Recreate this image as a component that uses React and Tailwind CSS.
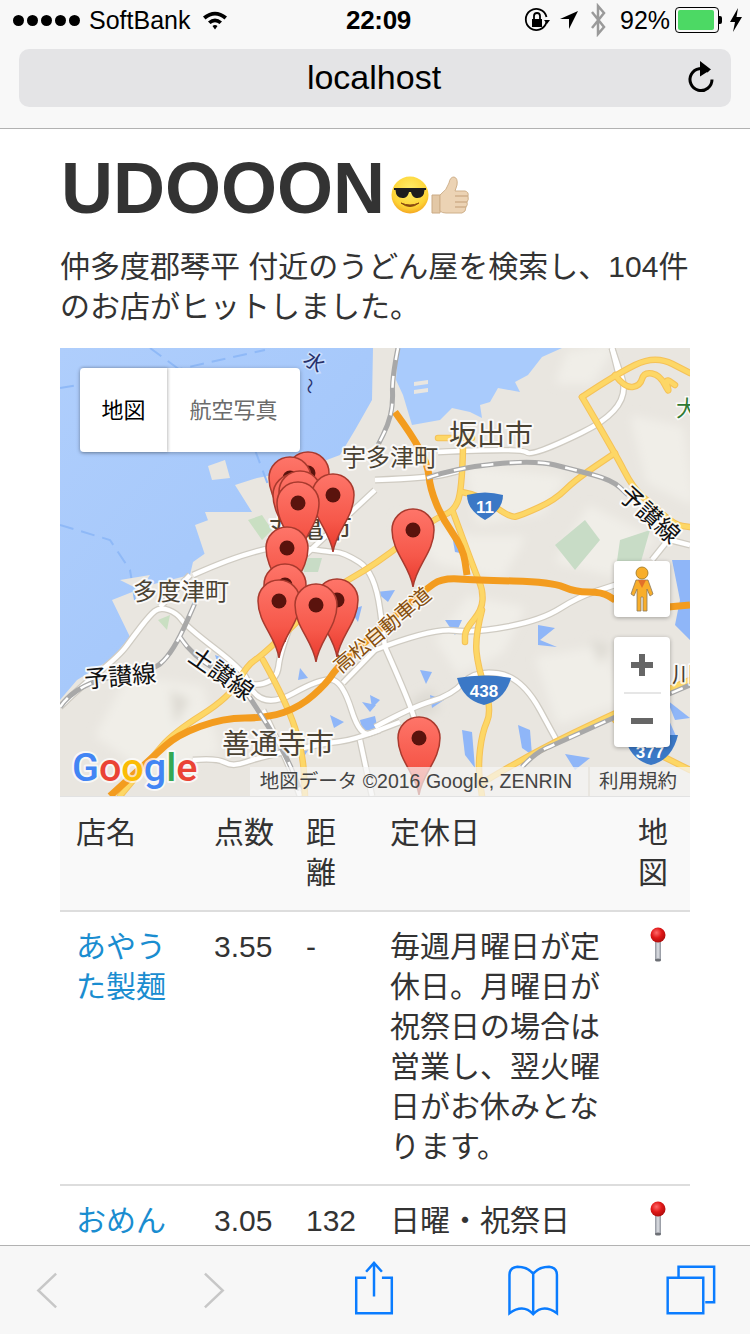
const whiteRoads = [
  'M375 480 L430 478 L462 470',
  'M438 452 L522 448 L532 457 L632 408 L612 348',
  'M60 707 L77 690 L120 655 L133 637 L150 615 L160 607 L177 613 L187 627 L243 670 L250 687 L277 680 L280 653 L300 600',
  'M250 687 L263 710 L323 677 L343 683 L360 737 L380 730',
  'M263 710 L287 760 L300 796',
  'M193 760 L217 758 L233 767 L260 757 L327 743 L353 740 L400 722',
  'M360 740 L372 796',
  'M375 650 L432 628 L475 633 L542 620 L578 597 L615 585',
  'M343 683 L375 650',
  'M375 727 L412 707 L452 695 L475 670 L522 677 L558 743',
  'M385 647 L413 710 L416 730',
  'M193 575 L267 542 L327 552 L343 552 L375 572 L385 647',
  'M190 575 L160 607',
  'M300 560 L375 490',
  'M670 540 L690 545',
  'M652 560 L668 540',
  'M612 348 L620 380',
]
const yellowRoads = [
  'M438 438 L472 438',
  'M463 448 L462 492 L453 512 L435 518 L375 565 L330 590 L263 655 L247 665 L230 697 L173 733 L150 760 L120 796',
  'M462 492 L480 495 L510 518 L522 515 L555 500 L575 480 L615 453',
  'M582 397 L615 453 L633 488 L652 505 L675 525 L690 527',
  'M582 397 L615 375 L655 355 L690 373',
  'M615 375 L625 388 L640 386 L644 372 L660 375 L670 395 L665 378 L675 385',
  'M453 512 L475 572 L483 590 L482 610 L465 630 L465 642',
  'M482 610 L475 637 L478 667 L492 710 L482 733 L478 767 L482 796',
  'M263 660 L287 703 L303 753 L305 796',
  'M482 783 L532 753 L615 713 L690 680',
  'M615 720 L640 745 L690 770',
]
const highway =
  'M110 796 L153 757 L177 735 L223 718 L267 718 L300 707 L327 683 L337 667 L390 620 L425 590 L442 578 L475 580 L552 582 L575 592 L602 592 L615 600 M668 607 L690 605 M395 412 L412 435 L428 465 L430 488 L442 518 L463 548 L467 575'
const railway =
  'M398 348 L392 378 L393 405 L388 425 L378 445 M60 707 L77 683 L153 670 L167 658 L180 637 L195 603 M180 637 L193 657 L240 683 L260 713 L287 757 L300 790 M427 478 L455 468 L535 460 L575 470 L612 480 L628 495 M522 767 L535 753 L558 743 L615 717 L690 685'
const waterPatches = [
  'M538 625 L555 628 L540 640 L557 647 L538 645 Z',
  'M518 725 L530 730 L532 755 L522 748 Z',
  'M462 730 L472 732 L475 768 L465 755 Z',
  'M420 670 L432 672 L426 684 Z',
  'M360 720 L375 716 L378 730 L362 730 Z',
  'M330 715 L344 722 L334 728 Z',
  'M362 702 L376 705 L370 712 Z',
  'M215 655 L228 660 L218 664 Z',
  'M296 745 L310 747 L302 760 Z',
  'M652 720 L660 728 L668 718 L676 736 L656 735 Z',
  'M565 754 L590 758 L575 770 Z',
  'M445 620 L462 620 L455 635 Z',
  'M430 695 L444 700 L432 708 Z',
  'M370 695 L380 700 L372 708 Z',
  'M300 668 L308 678 L298 680 Z',
  'M376 592 L395 590 L388 602 Z',
  'M350 610 L362 606 L358 622 Z',
  'M672 560 L690 560 L690 640 L675 625 L680 600 Z',
  'M667 700 L690 718 L675 720 Z',
  'M452 535 L470 555 L455 552 Z',
]
const landPatches = [
  'M130 680 L200 690 L215 750 L150 770 L100 735 Z',
  'M440 640 L470 600 L520 610 L500 650 L460 670 Z',
  'M540 660 L600 650 L620 700 L560 720 Z',
  'M400 520 L470 540 L520 540 L500 575 L440 560 Z',
  'M590 510 L650 540 L612 572 L560 560 Z',
  'M635 420 L680 430 L690 500 L650 480 Z',
  'M470 470 L560 480 L540 510 L480 520 Z',
  'M570 355 L610 348 L590 380 L560 380 Z',
]
const pins = [
  [308, 473], [290, 478], [294, 495], [300, 492], [333, 495], [298, 503], [287, 548], [285, 585],
  [337, 600], [279, 601], [316, 605], [413, 530], [419, 738],
]

// turn the straight road segments into soft curves
function smooth(d) {
  return d
    .split('M')
    .filter((part) => part.trim())
    .map((part) => {
      const pts = part.trim().split(/\s*L\s*/).map((p) => p.split(' ').map(Number))
      let out = `M${pts[0][0]} ${pts[0][1]}`
      for (let i = 1; i < pts.length - 1; i++) {
        const midX = (pts[i][0] + pts[i + 1][0]) / 2
        const midY = (pts[i][1] + pts[i + 1][1]) / 2
        out += ` Q${pts[i][0]} ${pts[i][1]} ${midX} ${midY}`
      }
      const last = pts[pts.length - 1]
      return `${out} L${last[0]} ${last[1]}`
    })
    .join(' ')
}

function MapDrawing() {
  return (
    <svg viewBox="60 348 630 448" className="block h-[448px] w-[630px]">
      <defs>
        <linearGradient id="sea" x1="0" y1="0" x2="1" y2="1">
          <stop offset="0" stopColor="#afcefc" />
          <stop offset="1" stopColor="#9fc4fa" />
        </linearGradient>
        <linearGradient id="pinFill" x1="0" y1="0" x2="0" y2="1">
          <stop offset="0" stopColor="#fe7569" />
          <stop offset="0.6" stopColor="#f6584a" />
          <stop offset="1" stopColor="#e8392c" />
        </linearGradient>
        <filter id="soft" x="-20%" y="-20%" width="140%" height="140%">
          <feGaussianBlur stdDeviation="5" />
        </filter>
      </defs>
      <rect x="60" y="348" width="630" height="448" fill="#e9e6e0" />
      <g filter="url(#soft)">
        {landPatches.map((d) => (
          <path key={d} d={d} fill="#f0eee8" stroke="#f0eee8" strokeWidth="8" strokeLinejoin="round" />
        ))}
        <path d="M410 700 L432 688 L440 710 L415 722 Z M170 690 L190 700 L175 725 Z M590 640 L610 645 L600 665 Z" fill="#dedbd4" />
      </g>

      {/* sea and harbour */}
      <path
        d="M60 348 L373 348 L372 400 L355 430 L340 455 L300 470 L257 478 L235 485 L252 512 L205 512 L217 545 L193 562 L190 575 L150 585 L112 600 L130 637 L110 660 L77 680 L60 700 Z"
        fill="url(#sea)"
      />
      <path
        d="M398 348 L562 348 L542 357 L528 375 L515 382 L520 392 L498 388 L490 402 L480 405 L482 418 L470 412 L452 408 L440 420 L412 425 L403 395 L396 380 Z"
        fill="#a9cbfc"
      />
      <path d="M414 382 L428 380 L428 384 L414 386 Z M414 390 L428 388 L428 392 L414 394 Z" fill="#e9e6e0" />
      <path d="M60 388 L110 380 L175 370 L265 350 M150 348 L180 370 M255 450 L270 490 M60 525 L110 540 L130 570 L135 600" fill="none" stroke="#8fb9f7" strokeWidth="2" strokeDasharray="14 8" />
      <path d="M208 466 L225 460 L230 478 L212 480 Z M262 485 L280 478 L292 500 L272 505 Z M195 525 L222 515 L235 540 L205 555 Z M120 580 L150 575 L140 590 Z M140 625 L165 610 L150 640 Z" fill="#e9e6e0" />
      <path d="M248 520 L262 515 L272 530 L262 540 Z M158 620 L170 615 L167 630 Z" fill="#c9dfc2" />
      <path d="M555 545 L585 520 L600 540 L575 570 Z M620 540 L650 530 L640 565 L615 575 Z M300 558 L322 558 L318 572 L304 572 Z" fill="#c8dcc6" />
      {waterPatches.map((d) => (
        <path key={d} d={d} fill="#8fb6f8" />
      ))}

      {/* roads */}
      {whiteRoads.map((d) => (
        <path key={d} d={smooth(d)} fill="none" stroke="#cfcbc2" strokeWidth="7" strokeLinejoin="round" />
      ))}
      {whiteRoads.map((d) => (
        <path key={d} d={smooth(d)} fill="none" stroke="#ffffff" strokeWidth="4.5" strokeLinejoin="round" />
      ))}
      {yellowRoads.map((d) => (
        <path key={d} d={smooth(d)} fill="none" stroke="#f5c258" strokeWidth="6.5" strokeLinejoin="round" strokeLinecap="round" />
      ))}
      {yellowRoads.map((d) => (
        <path key={d} d={smooth(d)} fill="none" stroke="#fdd766" strokeWidth="4.5" strokeLinejoin="round" strokeLinecap="round" />
      ))}
      <path d={smooth(highway)} fill="none" stroke="#f39c1f" strokeWidth="7" strokeLinejoin="round" />
      <path d={smooth(railway)} fill="none" stroke="#a8a8a8" strokeWidth="5" strokeLinejoin="round" />
      <path d={smooth(railway)} fill="none" stroke="#ffffff" strokeWidth="2.5" strokeDasharray="12 16" strokeLinejoin="round" />

      {/* route shields */}
      <path d="M467 495 Q485 490 503 495 Q503 510 485 520 Q467 510 467 495 Z" fill="#3b78c6" />
      <text x="485" y="513" textAnchor="middle" fontSize="17" fontWeight="700" fill="#ffffff">11</text>
      <path d="M457 678 Q483 673 511 678 Q505 700 484 705 Q463 700 457 678 Z" fill="#3b78c6" />
      <text x="484" y="697" textAnchor="middle" fontSize="17" fontWeight="700" fill="#ffffff">438</text>
      <path d="M624 735 L678 735 Q672 760 651 765 Q630 760 624 735 Z" fill="#3b78c6" />
      <text x="650" y="758" textAnchor="middle" fontSize="17" fontWeight="700" fill="#ffffff">377</text>

      {/* place names */}
      <g fill="#4a4233" stroke="#ffffff" strokeOpacity="0.8" strokeWidth="4" strokeLinejoin="round" className="[paint-order:stroke]">
        <text x="449" y="445" fontSize="28">坂出市</text>
        <text x="342" y="466" fontSize="24">宇多津町</text>
        <text x="133" y="600" fontSize="24">多度津町</text>
        <text x="222" y="754" fontSize="28">善通寺市</text>
        <text x="268" y="538" fontSize="28">丸亀市</text>
        <text x="672" y="682" fontSize="22">川田</text>
      </g>
      <g fill="#111111" stroke="#ffffff" strokeOpacity="0.85" strokeWidth="4" strokeLinejoin="round" className="[paint-order:stroke]">
        <text x="85" y="688" fontSize="24" transform="rotate(-5 85 688)">予讃線</text>
        <text x="187" y="660" fontSize="24" transform="rotate(35 187 660)">土讃線</text>
        <text x="617" y="497" fontSize="24" transform="rotate(42 617 497)">予讃線</text>
      </g>
      <text x="341" y="674" fontSize="20" fill="#86500f" stroke="#ffffff" strokeOpacity="0.8" strokeWidth="3" strokeLinejoin="round" className="[paint-order:stroke]" transform="rotate(-40 341 674)">高松自動車道</text>
      <text x="0" y="0" fontSize="20" fill="#27306b" stroke="#ffffff" strokeOpacity="0.4" strokeWidth="3" className="[paint-order:stroke]" transform="translate(302 362) rotate(35)">水</text>
      <text x="0" y="0" fontSize="16" fill="#27306b" transform="translate(304 378) rotate(90)">〜</text>
      <text x="676" y="416" fontSize="22" fill="#2f7a34" stroke="#ffffff" strokeOpacity="0.8" strokeWidth="3" className="[paint-order:stroke]">大</text>

      {/* markers */}
      {pins.map(([x, y]) => (
        <g key={`${x}-${y}`} transform={`translate(${x} ${y})`}>
          <path
            d="M0 57 C-3 36 -21 22 -21 0 A21 21 0 1 1 21 0 C21 22 3 36 0 57 Z"
            fill="url(#pinFill)"
            stroke="#a93a2e"
            strokeWidth="1.5"
          />
          <circle r="7.5" fill="#5a130d" />
        </g>
      ))}

      {/* google logo */}
      <text x="72" y="781" fontSize="39.5" fontWeight="500" stroke="#ffffff" strokeOpacity="0.7" strokeWidth="4" strokeLinejoin="round" className="font-['Roboto',sans-serif] [paint-order:stroke]">
        <tspan fill="#4285f4">G</tspan>
        <tspan fill="#ea4335">o</tspan>
        <tspan fill="#fbbc05">o</tspan>
        <tspan fill="#4285f4">g</tspan>
        <tspan fill="#34a853">l</tspan>
        <tspan fill="#ea4335">e</tspan>
      </text>
    </svg>
  )
}

function MapPanel() {
  return (
    <div className="relative h-[449px] w-[630px] overflow-hidden bg-[#e2e2e2]">
      <MapDrawing />
      <div className="absolute left-[20px] top-[20px] flex h-[84px] w-[220px] rounded-[4px] bg-white text-[22px] shadow-[0_1px_4px_rgba(0,0,0,0.3)]">
        <div className="flex w-[87px] items-center justify-center text-black shadow-[1px_0_3px_rgba(0,0,0,0.25)]">地図</div>
        <div className="flex flex-1 items-center justify-center text-[#6b6b6b]">航空写真</div>
      </div>
      <div className="absolute left-[554px] top-[213px] flex h-[56px] w-[56px] items-center justify-center rounded-[4px] bg-white shadow-[0_1px_4px_rgba(0,0,0,0.3)]">
        <svg width="24" height="46" viewBox="0 0 24 46">
          <circle cx="12" cy="7" r="6" fill="#f8ae2b" stroke="#9a7420" strokeWidth="0.8" />
          <path d="M6 14 H18 L23 28 L20 30 L17 23 V45 H13 V31 H11 V45 H7 V23 L4 30 L1 28 Z" fill="#f8ae2b" stroke="#8c7a5c" strokeWidth="0.8" />
          <path d="M8 14 H16 L12 22 Z" fill="#e2702a" />
        </svg>
      </div>
      <div className="absolute left-[554px] top-[289px] flex h-[110px] w-[56px] flex-col items-center rounded-[4px] bg-white shadow-[0_1px_4px_rgba(0,0,0,0.3)]">
        <div className="flex h-[55px] items-center justify-center">
          <svg width="22" height="22" viewBox="0 0 22 22"><path d="M8 0 H14 V8 H22 V14 H14 V22 H8 V14 H0 V8 H8 Z" fill="#666666" /></svg>
        </div>
        <div className="h-[2px] w-[37px] bg-[#e6e6e6]" />
        <div className="flex h-[53px] items-center justify-center">
          <svg width="22" height="6" viewBox="0 0 22 6"><rect width="22" height="6" fill="#666666" /></svg>
        </div>
      </div>
      <div className="absolute bottom-[1px] right-0 flex h-[29px] items-center gap-[2px] text-[19.5px] text-[#444444]">
        <div className="flex h-full w-[338px] items-center justify-center bg-[#f5f5f5]/70 pr-[6px]">地図データ ©2016 Google, ZENRIN</div>
        <div className="flex h-full w-[100px] items-center justify-center bg-[#f5f5f5]/70 pr-[4px]">利用規約</div>
      </div>
    </div>
  )
}

function PushPin() {
  return (
    <svg width="20" height="36" viewBox="0 0 20 36" className="ml-[26px] block">
      <defs>
        <radialGradient id="pinHead" cx="0.4" cy="0.35" r="0.7">
          <stop offset="0" stopColor="#ff6a6a" />
          <stop offset="0.5" stopColor="#e01818" />
          <stop offset="1" stopColor="#a80c0c" />
        </radialGradient>
        <linearGradient id="pinShaft" x1="0" y1="0" x2="1" y2="0">
          <stop offset="0" stopColor="#8f939c" />
          <stop offset="0.5" stopColor="#dfe1e6" />
          <stop offset="1" stopColor="#8f939c" />
        </linearGradient>
      </defs>
      <rect x="7" y="14" width="6" height="19" fill="url(#pinShaft)" />
      <ellipse cx="10" cy="33" rx="3" ry="1.5" fill="#6c6f75" />
      <circle cx="10" cy="8" r="7.5" fill="url(#pinHead)" />
    </svg>
  )
}

function CoolEmoji() {
  return (
    <svg width="38" height="38" viewBox="0 0 38 38">
      <defs>
        <radialGradient id="face" cx="0.5" cy="0.35" r="0.7">
          <stop offset="0" stopColor="#ffee6a" />
          <stop offset="0.7" stopColor="#fdd335" />
          <stop offset="1" stopColor="#f39a1c" />
        </radialGradient>
      </defs>
      <circle cx="19" cy="19" r="18.5" fill="url(#face)" />
      <path d="M3 12 H35 V14 H33.5 Q33 23 25 22 Q21 21 20 16 H18 Q17 21 13 22 Q5 23 4.5 14 H3 Z" fill="#1d1d1d" />
      <path d="M10 27 Q19 34 28 27 Q19 31 10 27 Z" fill="#8a4b10" stroke="#8a4b10" strokeWidth="1" />
    </svg>
  )
}

function ThumbEmoji() {
  return (
    <svg width="40" height="40" viewBox="0 0 40 40">
      <path d="M2 19 H10 V37 H2 Z" fill="#e3c8a6" stroke="#cbaa84" strokeWidth="1" />
      <path
        d="M10 19 Q17 14 19 7 Q20 1 24 1 Q28 2 27 9 L25 15 H35 Q39 16 38 20 Q39 24 37 26 Q38 29 36 31 Q36 36 32 37 H16 Q12 37 10 35 Z"
        fill="#ecd3b4"
        stroke="#cfb08a"
        strokeWidth="1"
      />
      <path d="M25 20 H38 M25 26 H37 M25 31 H36" stroke="#cfb08a" strokeWidth="1.5" fill="none" />
    </svg>
  )
}

function StatusBar() {
  return (
    <div className="flex h-[40px] items-center text-[25px] leading-none text-black">
      <div className="ml-[13px] flex w-[71px] gap-[3px]">
        {[0, 1, 2, 3, 4].map((i) => (
          <span key={i} className="h-[11px] w-[11px] rounded-full bg-black" />
        ))}
      </div>
      <span className="ml-[5px] w-[112px]">SoftBank</span>
      <svg width="26" height="20" viewBox="0 0 26 20" className="ml-[1px]">
        <path d="M1 6.5 Q13 -3 25 6.5 L22.5 9.5 Q13 1.5 3.5 9.5 Z M6 11.5 Q13 5.5 20 11.5 L17.5 14 Q13 10.5 8.5 14 Z M10.5 16 Q13 14 15.5 16 L13 19.5 Z" fill="#000000" />
      </svg>
      <span className="ml-[118px] w-[70px] text-[26px] font-bold tracking-[-0.3px]">22:09</span>
      <svg width="26" height="28" viewBox="0 0 26 28" className="ml-[108px]">
        <path d="M22.5 16 A10.5 10.5 0 1 1 22.5 11" fill="none" stroke="#000000" strokeWidth="1.8" />
        <path d="M20 14 H26 L23 18 Z" fill="#000000" />
        <rect x="8" y="13" width="10" height="8" fill="#000000" />
        <path d="M10 13 V10 A3 3 0 0 1 16 10 V13" fill="none" stroke="#000000" strokeWidth="1.8" />
      </svg>
      <svg width="20" height="20" viewBox="0 0 20 20" className="ml-[9px]">
        <path d="M19 1 L1 9 H10 V19 Z" fill="#000000" />
      </svg>
      <svg width="16" height="34" viewBox="0 0 16 34" className="ml-[11px]">
        <path d="M2 9 L14 24 L8 31 V3 L14 10 L2 25" fill="none" stroke="#9a9a9a" strokeWidth="2.5" />
      </svg>
      <span className="ml-[14px] w-[53px]">92%</span>
      <div className="ml-[2px] h-[26px] w-[44px] rounded-[4px] border border-black p-[2px]">
        <div className="h-full w-[36px] rounded-[2px] bg-[#4cd964]" />
      </div>
      <div className="h-[8px] w-[3px] rounded-r-[2px] bg-black" />
      <svg width="12" height="24" viewBox="0 0 12 24" className="ml-[8px]">
        <path d="M8 0 L0 14 H5 L3 24 L12 9 H6.5 Z" fill="#000000" />
      </svg>
    </div>
  )
}

function BrowserHeader() {
  return (
    <header className="h-[129px] shrink-0 border-b border-[#b2b2b2] bg-[#f8f8f8]">
      <StatusBar />
      <div className="mx-[19px] mt-[9px] flex h-[58px] items-center rounded-[10px] bg-[#e4e4e6] pr-[15px]">
        <span className="mb-[2px] flex-1 pl-[43px] text-center text-[34px] leading-none text-black">localhost</span>
        <svg width="30" height="34" viewBox="0 0 30 34">
          <path d="M22.5 10.5 A11 11 0 1 0 26 18.5" fill="none" stroke="#000000" strokeWidth="3" />
          <path d="M14 0 L25 8.5 L14 15.5 Z" fill="#000000" />
        </svg>
      </div>
    </header>
  )
}

function BrowserToolbar() {
  return (
    <footer className="flex h-[89px] shrink-0 border-t border-[#b2b2b2] bg-[#f7f7f7]">
      <svg viewBox="0 1245 750 89" className="block h-[88px] w-[750px]" fill="none">
        <path d="M52.5 1273 L34.5 1290 L52.5 1307" stroke="#c7c7c7" strokeWidth="2.5" />
        <path d="M203 1273 L221 1290 L203 1307" stroke="#c7c7c7" strokeWidth="2.5" />
        <g stroke="#0a7cff" strokeWidth="2.5">
          <path d="M366 1277 H356 V1313 H392 V1277 H382" />
          <path d="M374 1296 V1263 M366 1271 L374 1262 L382 1271" />
          <path d="M535 1273 Q529 1266 519 1266 Q511 1267 511 1274 V1313 Q525 1303 535 1314 Q545 1303 559 1313 V1274 Q559 1267 551 1266 Q541 1266 535 1273 Z M535 1273 V1314" />
          <path d="M682 1277 V1266 H718 V1302 H709" />
          <path d="M671 1277 H707 V1313 H671 Z" />
        </g>
      </svg>
    </footer>
  )
}

export default function App() {
  return (
    <div className="flex h-[1334px] w-[750px] flex-col overflow-hidden bg-white font-['Liberation_Sans','Noto_Sans_CJK_JP',sans-serif] text-[#333333]">
      <BrowserHeader />
      <main className="min-h-0 flex-1 overflow-hidden px-[60px]">
        <div className="mt-[20px] flex items-end">
          <h1 className="ml-[1px] text-[72px] font-bold leading-[79px]">UDOOON</h1>
          <div className="mb-[12px] ml-[6px] flex gap-[1px]">
            <CoolEmoji />
            <ThumbEmoji />
          </div>
        </div>
        <p className="mt-[19px] text-[30px] leading-[40px]">仲多度郡琴平 付近のうどん屋を検索し、104件のお店がヒットしました。</p>
        <div className="mt-[21px]">
          <MapPanel />
        </div>
        <table className="w-[630px] table-fixed border-collapse text-left text-[30px] leading-[40px]">
          <colgroup>
            <col className="w-[138px]" />
            <col className="w-[92px]" />
            <col className="w-[84px]" />
            <col className="w-[248px]" />
            <col className="w-[68px]" />
          </colgroup>
          <thead>
            <tr className="border-b-2 border-[#dddddd] bg-[#f9f9f9]">
              <th className="px-[16px] pb-[17px] pt-[16px] align-top font-normal">店名</th>
              <th className="px-[16px] pb-[17px] pt-[16px] align-top font-normal">点数</th>
              <th className="px-[16px] pb-[17px] pt-[16px] align-top font-normal">距離</th>
              <th className="px-[16px] pb-[17px] pt-[16px] align-top font-normal">定休日</th>
              <th className="px-[16px] pb-[17px] pt-[16px] align-top font-normal">地図</th>
            </tr>
          </thead>
          <tbody>
            <tr className="border-b-2 border-[#dddddd]">
              <td className="px-[16px] pb-[17px] pt-[15px] align-top text-[#1a8dd0]">あやうた製麺</td>
              <td className="px-[16px] pb-[17px] pt-[15px] align-top">3.55</td>
              <td className="px-[16px] pb-[17px] pt-[15px] align-top">-</td>
              <td className="px-[16px] pb-[17px] pt-[15px] align-top">毎週月曜日が定休日。月曜日が祝祭日の場合は営業し、翌火曜日がお休みとなります。</td>
              <td className="p-0 pt-[15px] align-top"><PushPin /></td>
            </tr>
            <tr>
              <td className="px-[16px] py-[15px] align-top text-[#1a8dd0]">おめん</td>
              <td className="px-[16px] py-[15px] align-top">3.05</td>
              <td className="px-[16px] py-[15px] align-top">132</td>
              <td className="px-[16px] py-[15px] align-top">日曜・祝祭日</td>
              <td className="p-0 pt-[15px] align-top"><PushPin /></td>
            </tr>
          </tbody>
        </table>
      </main>
      <BrowserToolbar />
    </div>
  )
}
